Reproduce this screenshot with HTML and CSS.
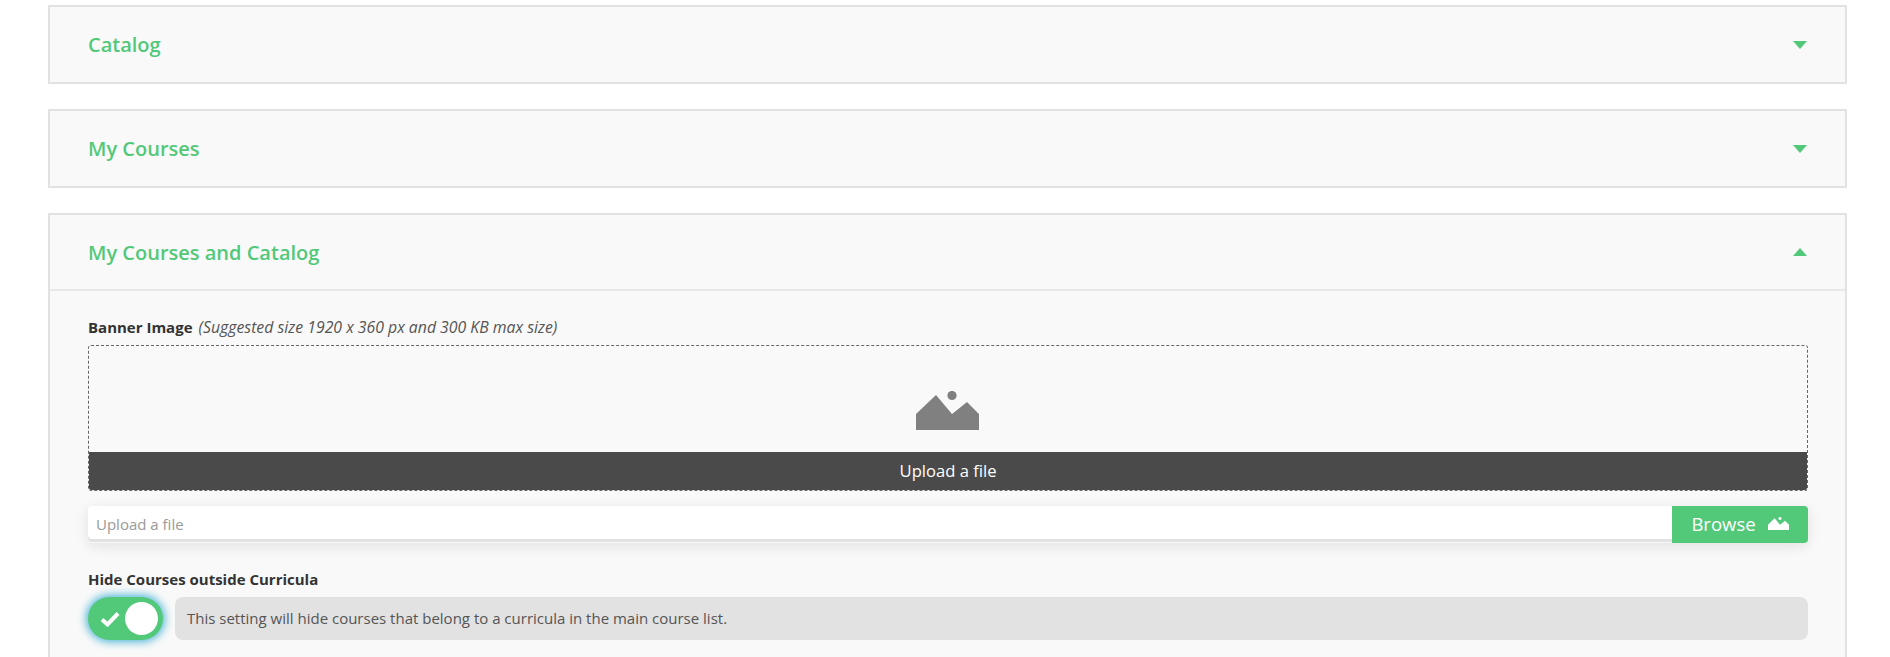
FILE: index.html
```html
<!DOCTYPE html>
<html lang="en">
<head>
<meta charset="utf-8">
<title>Settings</title>
<link rel="stylesheet" href="styles.css">
</head>
<body>
<main class="page">
  <section class="panel">
    <header class="panel-head"><h2 class="panel-title">Catalog</h2><span class="caret caret-down"></span></header>
  </section>
  <section class="panel">
    <header class="panel-head"><h2 class="panel-title">My Courses</h2><span class="caret caret-down"></span></header>
  </section>
  <section class="panel">
    <header class="panel-head panel-head-open"><h2 class="panel-title">My Courses and Catalog</h2><span class="caret caret-up"></span></header>
    <div class="panel-body">
      <div class="field-label"><strong>Banner Image</strong><em class="hint">(Suggested size 1920 x 360 px and 300 KB max size)</em></div>
      <div class="dropzone">
        <div class="preview">
          <svg class="mountain" viewBox="0 0 63 39" aria-hidden="true"><circle cx="36" cy="4.5" r="4.6"/><path d="M0 39V23L20 4 36 23 51 11 63 23V39Z"/></svg>
        </div>
        <div class="upload-bar">Upload a file</div>
      </div>
      <div class="file-row">
        <div class="file-input">Upload a file</div>
        <button class="browse" type="button">Browse
          <svg class="browse-icon" viewBox="0 0 63 39" aria-hidden="true"><circle cx="36" cy="4.5" r="4.6"/><path d="M0 39V23L20 4 36 23 51 11 63 23V39Z"/></svg>
        </button>
      </div>
      <div class="setting-label">Hide Courses outside Curricula</div>
      <div class="setting-row">
        <div class="toggle">
          <svg class="check" viewBox="0 0 20 16" aria-hidden="true"><path d="M2 8.5 7.5 13.5 18 2.5" fill="none" stroke="#fff" stroke-width="4"/></svg>
          <span class="knob"></span>
        </div>
        <div class="note">This setting will hide courses that belong to a curricula in the main course list.</div>
      </div>
    </div>
  </section>
</main>
</body>
</html>
```
FILE: styles.css
```css
* { box-sizing: border-box; }
html, body { margin: 0; height: 100%; overflow: hidden; background: #fff; }
body { font-family: "Open Sans", "Liberation Sans", sans-serif; color: #333; }
.page { padding: 5px 43px 0 48px; }
.panel { background: #f9f9f9; border: 2px solid #e2e2e2; margin-bottom: 25px; }
.panel-head { height: 75px; padding: 0 38px; display: flex; align-items: center; justify-content: space-between; }
.panel-head-open { height: 76px; border-bottom: 2px solid #e8e8e8; }
.panel-title { margin: 0; font-size: 20px; font-weight: 600; color: #52c879; }
.caret { width: 0; height: 0; border-left: 7.5px solid transparent; border-right: 7.5px solid transparent; }
.caret-down { border-top: 8px solid #52c879; }
.caret-up { border-bottom: 8px solid #52c879; }
.panel-body { padding: 26px 37px 60px 38px; }
.field-label { font-size: 15px; line-height: 20px; color: #333; margin-bottom: 8px; }
.field-label strong { font-weight: 700; }
.hint { margin-left: 6px; font-size: 15.8px; font-style: italic; color: #555; }
.dropzone { height: 146px; border: 1px dashed #666; border-radius: 3px; display: flex; flex-direction: column; overflow: hidden; }
.preview { flex: 1; display: flex; align-items: flex-start; justify-content: center; padding: 45px 2px 0 0; }
.mountain { width: 63px; height: 39px; fill: #808080; }
.upload-bar { height: 38px; background: #4a4a4a; color: #fff; font-size: 16.6px; font-weight: 500; display: flex; align-items: center; justify-content: center; padding-bottom: 2px; }
.file-row { display: flex; height: 37px; margin-top: 15px; border-radius: 4px; box-shadow: 0 3px 14px rgba(0,0,0,.1); }
.file-input { flex: 1; height: 33px; background: #fff; border-radius: 4px 0 0 4px; color: #999; font-size: 15px; line-height: 37px; padding-left: 8px; box-shadow: 0 3px 0 #e2e2e2; }
.browse { width: 136px; border: 0; background: #52c879; color: #fff; font: 400 18.5px "Open Sans", sans-serif; border-radius: 0 4px 4px 0; display: flex; align-items: center; justify-content: center; gap: 12px; padding: 0 0 2px; }
.browse-icon { width: 21px; height: 13px; fill: #fff; }
.setting-label { font-size: 15px; font-weight: 700; line-height: 20px; color: #333; margin-top: 26px; }
.setting-row { display: flex; gap: 12px; margin-top: 8px; }
.toggle { width: 75px; height: 43px; border-radius: 22px; background: #52c879; box-shadow: 0 0 9px 2px #4db5d6; display: flex; align-items: center; justify-content: space-between; padding: 0 5px 0 12px; flex: none; }
.check { width: 20px; height: 16px; }
.knob { width: 33px; height: 33px; border-radius: 50%; background: #fff; }
.note { flex: 1; height: 43px; background: #e2e2e2; border-radius: 8px; padding: 0 12px; font-size: 15px; line-height: 43px; color: #555; }
```
